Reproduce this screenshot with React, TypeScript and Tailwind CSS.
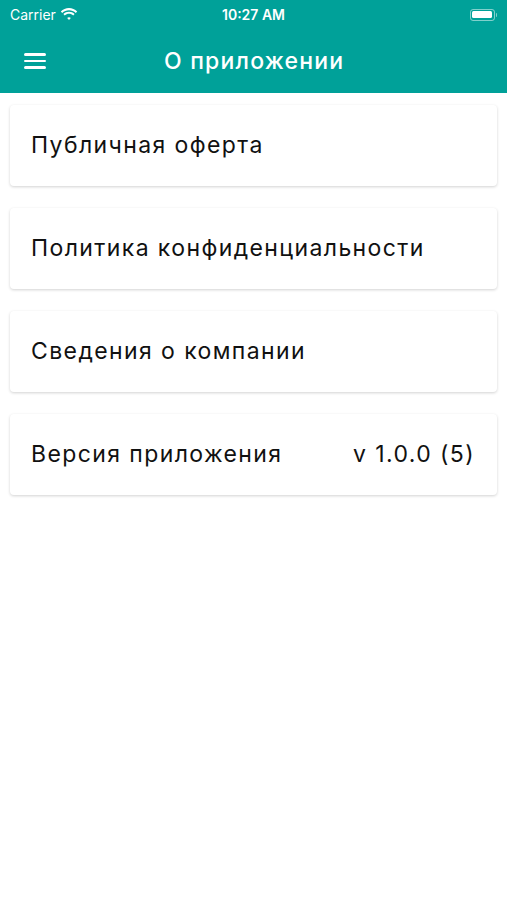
export default function App() {
  const items: { label: string; value?: string }[] = [
    { label: "Публичная оферта" },
    { label: "Политика конфиденциальности" },
    { label: "Сведения о компании" },
    { label: "Версия приложения", value: "v 1.0.0 (5)" },
  ];

  return (
    <div className="w-[507px] h-[900px] bg-white font-['Inter','Liberation_Sans',sans-serif] overflow-hidden">
      <div className="bg-[#00a199] text-white">
        {/* status bar */}
        <div className="relative h-[29px] flex items-center px-[10px] text-[14px]">
          <div className="flex items-center gap-[4px]">
            <span>Carrier</span>
            <svg width="18" height="13" viewBox="0 0 18 13" fill="white">
              <path d="M9 2.2c2.6 0 5 1 6.8 2.7l1.4-1.5C15 1.3 12.1 0 9 0S3 1.3.8 3.4l1.4 1.5C4 3.2 6.4 2.2 9 2.2z" />
              <path d="M9 5.8c1.6 0 3.1.6 4.2 1.7l1.4-1.5C13.1 4.6 11.1 3.7 9 3.7S4.9 4.6 3.4 6l1.4 1.5C5.9 6.4 7.4 5.8 9 5.8z" />
              <path d="M9 9.2c.7 0 1.3.3 1.8.7L9 12 7.2 9.9c.5-.4 1.1-.7 1.8-.7z" />
            </svg>
          </div>
          <span className="absolute left-1/2 -translate-x-1/2 font-semibold">10:27 AM</span>
          <div className="ml-auto flex items-center">
            <div className="w-[25px] h-[12px] rounded-[3px] border border-white/50 p-[1.5px]">
              <div className="w-full h-full rounded-[1.5px] bg-white" />
            </div>
            <div className="w-[1.5px] h-[4px] bg-white/50 rounded-r-sm ml-[1px]" />
          </div>
        </div>
        {/* nav bar */}
        <div className="relative h-[64px] flex items-center">
          <div className="pl-[24px] flex flex-col gap-[4px]">
            <div className="w-[22px] h-[2.5px] bg-white rounded-full" />
            <div className="w-[22px] h-[2.5px] bg-white rounded-full" />
            <div className="w-[22px] h-[2.5px] bg-white rounded-full" />
          </div>
          <span className="absolute left-[164px] text-[23px] font-medium tracking-[1.2px]">
            О приложении
          </span>
        </div>
      </div>

      <div className="flex flex-col gap-[22px] px-[10px] pt-[12px]">
        {items.map((it) => (
          <div
            key={it.label}
            className="h-[81px] rounded-[4px] bg-white shadow-[0_1px_3px_rgba(0,0,0,0.18)] flex items-center justify-between pl-[21px] pr-[22px] text-[23px] text-[#111] tracking-[1.4px]"
          >
            <span>{it.label}</span>
            {it.value && <span>{it.value}</span>}
          </div>
        ))}
      </div>
    </div>
  );
}
